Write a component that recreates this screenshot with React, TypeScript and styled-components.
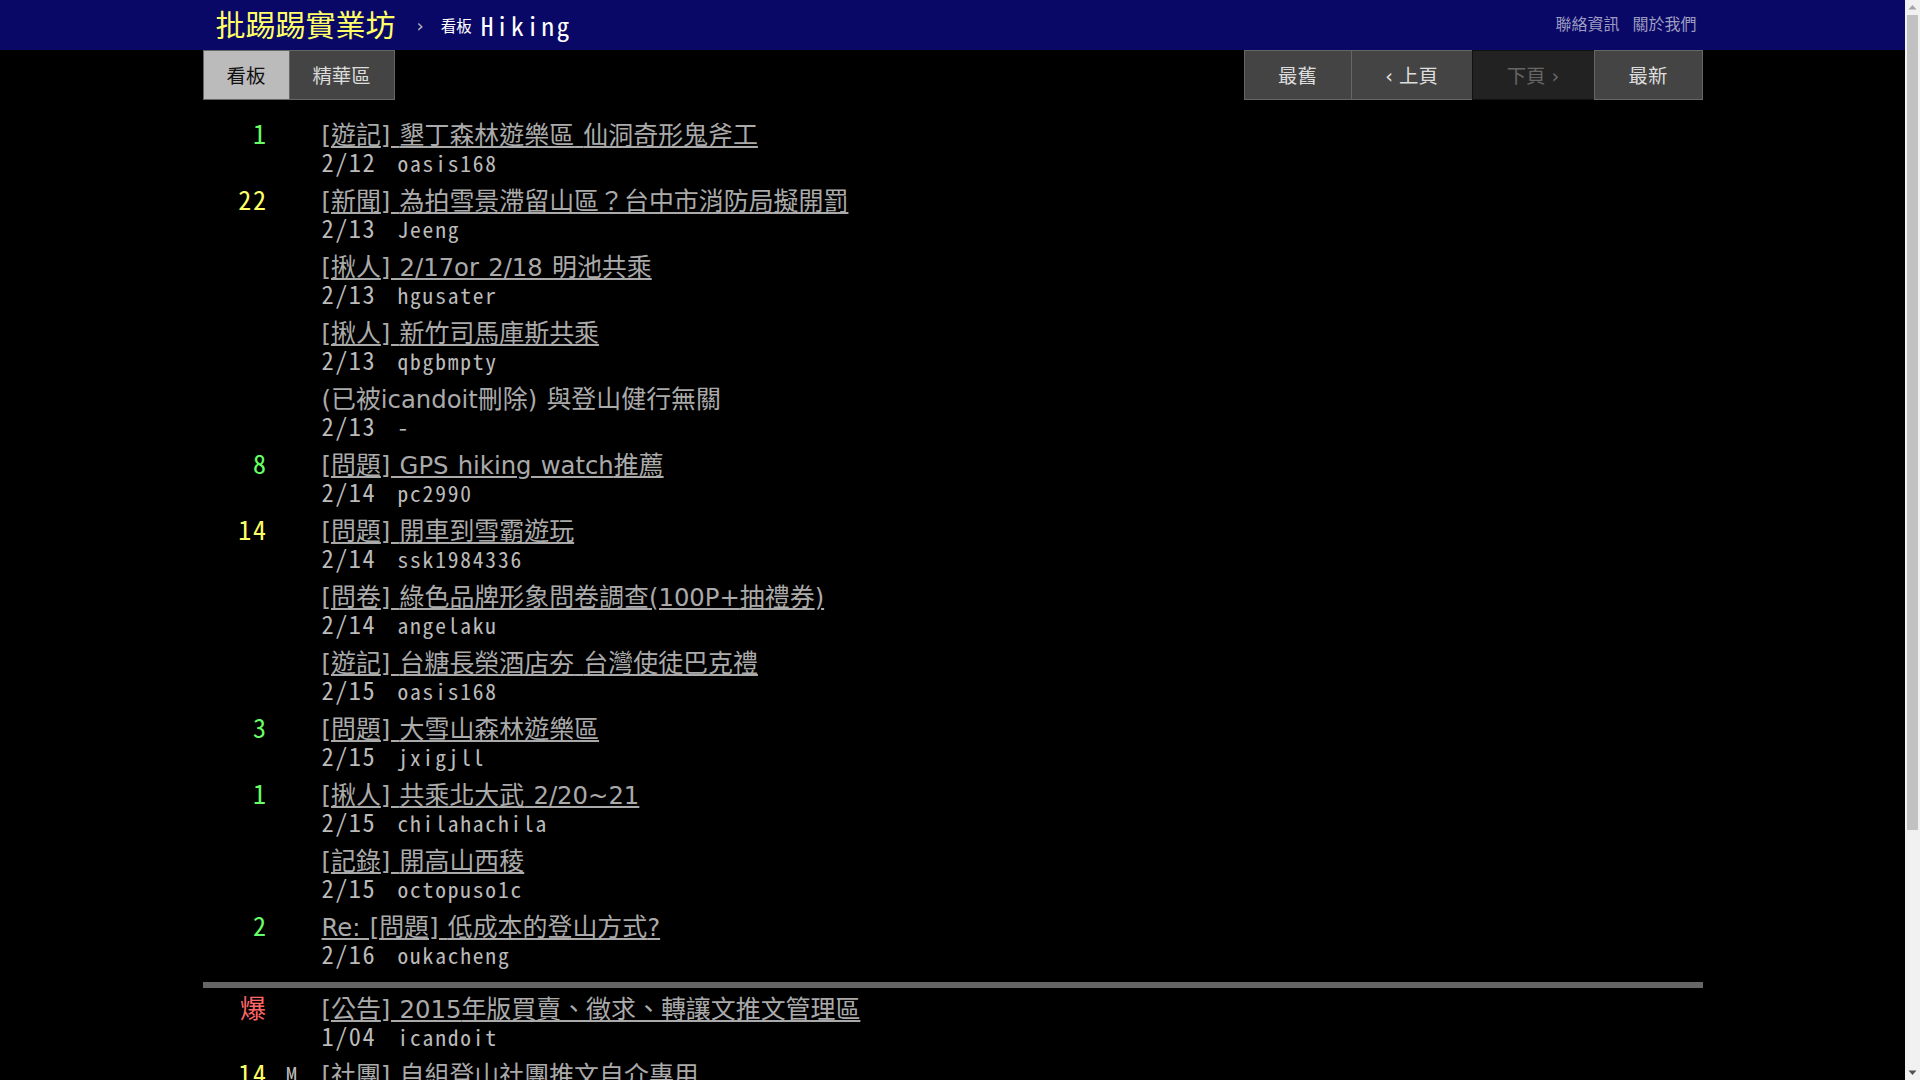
import React from "react";
import styled, { createGlobalStyle } from "styled-components";

const MONO = `"Noto Sans Mono CJK TC", "Liberation Mono", "DejaVu Sans Mono", "Noto Sans CJK TC", monospace`;
const SANS = `"DejaVu Sans", "Noto Sans CJK TC", sans-serif`;

const Global = createGlobalStyle`
  html { background: #000; }
  body {
    margin: 0;
    padding-right: 15px;
    background: #000;
    color: #ccc;
    font-family: ${SANS};
  }
`;

const ScrollTrack = styled.aside`
  position: fixed;
  top: 0;
  right: 0;
  bottom: 0;
  width: 15px;
  background: #f1f1f1;
  display: flex;
  flex-direction: column;
  align-items: center;
`;
const ScrollArrow = styled.svg`
  width: 15px;
  height: 15px;
  flex: none;
`;
const ScrollThumb = styled.div`
  width: 11px;
  height: 815px;
  background: #c1c1c1;
`;
const ScrollRest = styled.div`
  flex: 1;
`;

const TopBar = styled.header`
  height: 50px;
  background: #0a0866;
`;
const TopInner = styled.div`
  width: 1500px;
  margin: 0 auto;
  height: 50px;
  display: flex;
  align-items: center;
  font-family: ${SANS};
`;
const Logo = styled.a`
  margin-left: 13px;
  margin-top: -5px;
  color: #ffff66;
  font-size: 30px;
`;
const Crumb = styled.span`
  margin-left: 21px;
  color: #bbb;
  font-size: 18px;
`;
const BoardLabel = styled.span`
  margin-left: 17px;
  color: #fff;
  font-size: 15.5px;
`;
const BoardName = styled.span`
  margin-left: 9px;
  margin-top: -2px;
  color: #fff;
  font-size: 25.5px;
  letter-spacing: 2.4px;
  font-family: ${MONO};
`;
const TopRight = styled.div`
  margin-left: auto;
  display: flex;
  gap: 13px;
  padding-right: 6px;
  margin-top: -5px;
  color: #9c9cc0;
  font-size: 16px;
`;

const Wrap = styled.main`
  width: 1500px;
  margin: 0 auto;
  padding-bottom: 9px;
`;
const ActionBar = styled.nav`
  display: flex;
  justify-content: space-between;
  height: 50px;
`;
const Group = styled.div`
  display: flex;
`;
const Btn = styled.a<{ $w: number; $active?: boolean; $off?: boolean }>`
  box-sizing: border-box;
  width: ${(p) => p.$w}px;
  height: 50px;
  padding-bottom: 2px;
  display: flex;
  align-items: center;
  justify-content: center;
  font-size: 19.4px;
  font-family: ${SANS};
  border: 1px solid ${(p) => (p.$off ? "#111" : "#666")};
  margin-left: -1px;
  background: ${(p) => (p.$active ? "#bbb" : p.$off ? "#222" : "#444")};
  color: ${(p) => (p.$active ? "#111" : p.$off ? "#666" : "#ddd")};
  &:first-child { margin-left: 0; }
`;

const List = styled.section`
  padding-top: 21px;
`;
const Row = styled.article`
  display: grid;
  grid-template-columns: 65px 46px 1fr;
  column-gap: 0;
  height: 66px;
`;
const Push = styled.div<{ $c: string }>`
  color: ${(p) => p.$c};
  font-family: ${MONO};
  font-size: 26px;
  letter-spacing: 1.6px;
  line-height: 24px;
  text-align: right;
`;
const Mark = styled.div`
  color: #bbb;
  font-family: ${MONO};
  font-size: 23px;
  line-height: 26px;
  text-align: center;
  padding-left: 2px;
`;
const Body = styled.div`
  min-width: 0;
  padding-left: 8px;
`;
const Title = styled.div`
  font-size: 24.3px;
  word-spacing: 1.5px;
  line-height: 30px;
  color: #aaa;
  font-family: ${SANS};
`;
const TitleLink = styled.a`
  color: #aaa;
  text-decoration: underline;
`;
const Han = styled.span`
  font-size: 24.95px;
  line-height: 1;
`;
const Meta = styled.div`
  display: flex;
  align-items: baseline;
  line-height: 22px;
  color: #bbb;
  font-family: ${MONO};
`;
const DateText = styled.span`
  width: 76px;
  font-size: 24.3px;
  letter-spacing: 1.5px;
`;
const Author = styled.span`
  font-size: 21.5px;
  letter-spacing: 1.8px;
`;
const Separator = styled.hr`
  border: 0;
  height: 6px;
  background: #666;
  margin: 3px 0 7px;
`;

type P = { n?: string; c?: string; m?: string; t: string; d: string; a: string; del?: boolean };
const GREEN = "#66ff66";
const YELLOW = "#ffff66";
const RED = "#ff6666";
const latest: P[] = [
  { n: "1", c: GREEN, t: "[遊記] 墾丁森林遊樂區 仙洞奇形鬼斧工", d: "2/12", a: "oasis168" },
  { n: "22", c: YELLOW, t: "[新聞] 為拍雪景滯留山區？台中市消防局擬開罰", d: "2/13", a: "Jeeng" },
  { t: "[揪人] 2/17or 2/18 明池共乘", d: "2/13", a: "hgusater" },
  { t: "[揪人] 新竹司馬庫斯共乘", d: "2/13", a: "qbgbmpty" },
  { t: "(已被icandoit刪除) 與登山健行無關", d: "2/13", a: "-", del: true },
  { n: "8", c: GREEN, t: "[問題] GPS hiking watch推薦", d: "2/14", a: "pc2990" },
  { n: "14", c: YELLOW, t: "[問題] 開車到雪霸遊玩", d: "2/14", a: "ssk1984336" },
  { t: "[問卷] 綠色品牌形象問卷調查(100P+抽禮券)", d: "2/14", a: "angelaku" },
  { t: "[遊記] 台糖長榮酒店夯 台灣使徒巴克禮", d: "2/15", a: "oasis168" },
  { n: "3", c: GREEN, t: "[問題] 大雪山森林遊樂區", d: "2/15", a: "jxigjll" },
  { n: "1", c: GREEN, t: "[揪人] 共乘北大武 2/20~21", d: "2/15", a: "chilahachila" },
  { t: "[記錄] 開高山西稜", d: "2/15", a: "octopuso1c" },
  { n: "2", c: GREEN, t: "Re: [問題] 低成本的登山方式?", d: "2/16", a: "oukacheng" },
];
const pinned: P[] = [
  { n: "爆", c: RED, t: "[公告] 2015年版買賣、徵求、轉讓文推文管理區", d: "1/04", a: "icandoit" },
  { n: "14", c: YELLOW, m: "M", t: "[社團] 自組登山社團推文自介專用", d: "1/04", a: "icandoit" },
  { n: "3", c: GREEN, m: "M", t: "[公告] 板規", d: "1/04", a: "icandoit" },
  { m: "M", t: "[公告] 精華區索引", d: "1/04", a: "icandoit" },
  { m: "M", t: "[公告] 活動置底", d: "1/04", a: "icandoit" },
  { m: "M", t: "[公告] 登山安全須知", d: "1/04", a: "icandoit" },
];

const runs = (text: string) =>
  text.split(/([\u3000-\u9fff\uff00-\uffef]+)/).map((s, i) =>
    i % 2 ? <Han key={i}>{s}</Han> : s
  );

const Entry = ({ p }: { p: P }) => (
  <Row>
    <Push $c={p.c ?? "#bbb"}>{p.n}</Push>
    <Mark>{p.m}</Mark>
    <Body>
      <Title>{p.del ? runs(p.t) : <TitleLink>{runs(p.t)}</TitleLink>}</Title>
      <Meta>
        <DateText>{p.d}</DateText>
        <Author>{p.a}</Author>
      </Meta>
    </Body>
  </Row>
);

export default function App() {
  return (
    <>
      <Global />
      <TopBar>
        <TopInner>
          <Logo>批踢踢實業坊</Logo>
          <Crumb>›</Crumb>
          <BoardLabel>看板</BoardLabel>
          <BoardName>Hiking</BoardName>
          <TopRight>
            <span>聯絡資訊</span>
            <span>關於我們</span>
          </TopRight>
        </TopInner>
      </TopBar>
      <Wrap>
        <ActionBar>
          <Group>
            <Btn $w={87} $active>看板</Btn>
            <Btn $w={106}>精華區</Btn>
          </Group>
          <Group>
            <Btn $w={108}>最舊</Btn>
            <Btn $w={122}>‹ 上頁</Btn>
            <Btn $w={123} $off>下頁 ›</Btn>
            <Btn $w={109}>最新</Btn>
          </Group>
        </ActionBar>
        <List>
          {latest.map((p, i) => <Entry key={i} p={p} />)}
          <Separator />
          {pinned.map((p, i) => <Entry key={i} p={p} />)}
        </List>
      </Wrap>
      <ScrollTrack>
        <ScrollArrow viewBox="0 0 15 15">
          <path d="M7.5 5L11.5 9.5H3.5z" fill="#a3a3a3" />
        </ScrollArrow>
        <ScrollThumb />
        <ScrollRest />
        <ScrollArrow viewBox="0 0 15 15">
          <path d="M3.5 5.5H11.5L7.5 10z" fill="#505050" />
        </ScrollArrow>
      </ScrollTrack>
    </>
  );
}
